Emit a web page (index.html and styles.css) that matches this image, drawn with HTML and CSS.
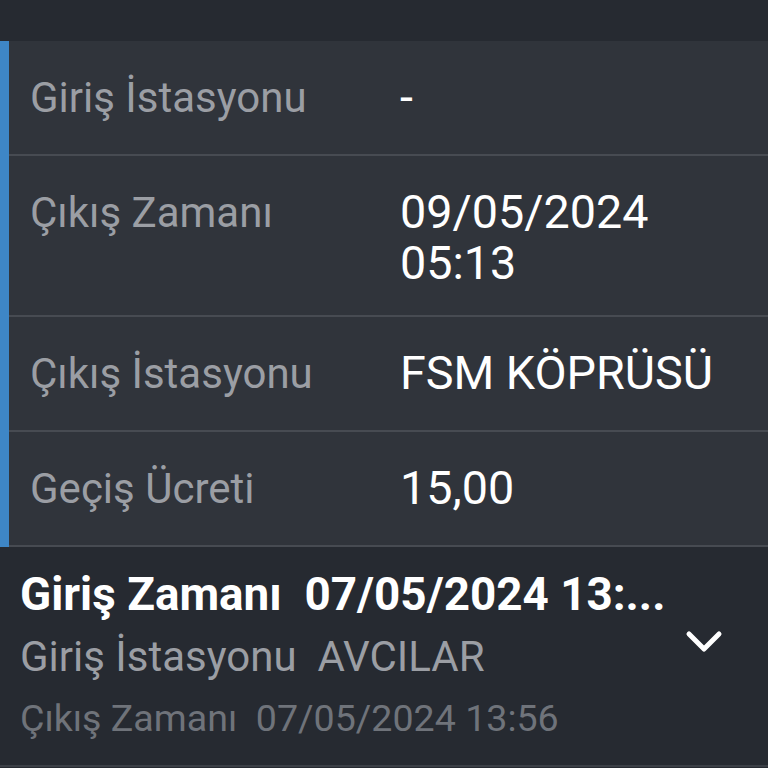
FILE: index.html
```html
<!DOCTYPE html>
<html lang="tr">
<head>
<meta charset="utf-8">
<link rel="stylesheet" href="styles.css">
</head>
<body>
<div class="topbar"></div>
<section class="details">
  <div class="row">
    <div class="label">Giriş İstasyonu</div>
    <div class="value">-</div>
  </div>
  <div class="row">
    <div class="label">Çıkış Zamanı</div>
    <div class="value">09/05/2024<br>05:13</div>
  </div>
  <div class="row">
    <div class="label">Çıkış İstasyonu</div>
    <div class="value">FSM KÖPRÜSÜ</div>
  </div>
  <div class="row">
    <div class="label">Geçiş Ücreti</div>
    <div class="value">15,00</div>
  </div>
</section>
<section class="card">
  <div class="card-text">
    <div class="card-title">Giriş Zamanı&nbsp; 07/05/2024 13:...</div>
    <div class="card-sub">Giriş İstasyonu&nbsp; AVCILAR</div>
    <div class="card-meta">Çıkış Zamanı&nbsp; 07/05/2024 13:56</div>
  </div>
  <svg class="chevron" width="40" height="26" viewBox="0 0 40 26" aria-hidden="true">
    <path d="M5 5 L20 20 L35 5" fill="none" stroke="#ffffff" stroke-width="5" stroke-linecap="round" stroke-linejoin="round"/>
  </svg>
</section>
</body>
</html>
```

FILE: styles.css
```css
html, body {
  margin: 0;
  padding: 0;
}
body {
  width: 768px;
  height: 768px;
  overflow: hidden;
  background: #262a31;
  font-family: Roboto, "Noto Sans", sans-serif;
}
.topbar {
  height: 41px;
  background: #262a31;
}
.details {
  background: #30343b;
  border-left: 9px solid #3e86c6;
}
.row {
  display: flex;
  align-items: flex-start;
  padding: 27px 0 26px 21px;
  border-bottom: 2px solid #474b52;
}
.label {
  width: 370px;
  flex: none;
  font-size: 42px;
  line-height: 60px;
  color: #9b9ea4;
  white-space: nowrap;
}
.value {
  font-size: 46.7px;
  line-height: 51px;
  padding-top: 4px;
  color: #ffffff;
  white-space: nowrap;
}
.card {
  display: flex;
  align-items: flex-start;
  padding: 0 44px 0 20px;
  height: 218px;
  background: #262a31;
  border-bottom: 2px solid #3b3f46;
}
.card-text {
  flex: 1;
  min-width: 0;
  display: flex;
  flex-direction: column;
  padding-top: 17px;
}
.card-title {
  font-size: 45.8px;
  font-weight: 700;
  line-height: 62px;
  color: #ffffff;
  white-space: nowrap;
}
.card-sub {
  font-size: 42px;
  line-height: 62px;
  color: #9b9ea4;
  white-space: nowrap;
}
.card-meta {
  font-size: 37.6px;
  line-height: 60px;
  color: #6f737a;
  white-space: nowrap;
}
.chevron {
  flex: none;
  margin-top: 82px;
}
```
